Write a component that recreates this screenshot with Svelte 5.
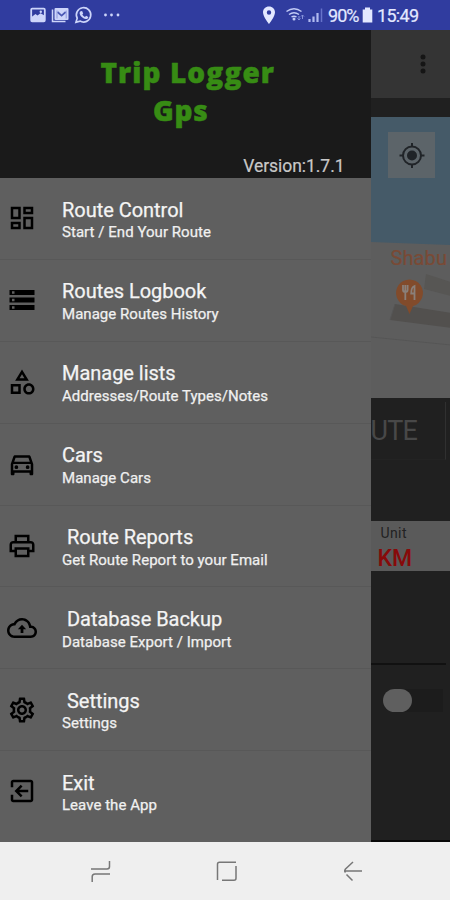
<script>
  const items = [
    { icon: 'dashboard', title: 'Route Control', sub: 'Start / End Your Route' },
    { icon: 'storage', title: 'Routes Logbook', sub: 'Manage Routes History' },
    { icon: 'category', title: 'Manage lists', sub: 'Addresses/Route Types/Notes' },
    { icon: 'car', title: 'Cars', sub: 'Manage Cars' },
    { icon: 'print', title: 'Route Reports', sub: 'Get Route Report to your Email', indent: true },
    { icon: 'backup', title: 'Database Backup', sub: 'Database Export / Import', indent: true },
    { icon: 'settings', title: 'Settings', sub: 'Settings', indent: true },
    { icon: 'exit', title: 'Exit', sub: 'Leave the App' }
  ];

  const paths = {
    dashboard: 'M19 5v2h-4V5h4M9 5v6H5V5h4m10 8v6h-4v-6h4M9 17v2H5v-2h4M21 3h-8v6h8V3zM11 3H3v10h8V3zm10 8h-8v10h8V11zm-10 4H3v6h8v-6z',
    storage: 'M2 20h20v-4H2v4zm2-3h2v2H4v-2zM2 4v4h20V4H2zm4 3H4V5h2v2zm-4 7h20v-4H2v4zm2-3h2v2H4v-2z',
    category: 'M12 2l-5.5 9h11L12 2zm0 3.84L13.93 9h-3.87L12 5.84zM17.5 13c-2.49 0-4.5 2.01-4.5 4.5s2.01 4.5 4.5 4.5 4.5-2.01 4.5-4.5-2.01-4.5-4.5-4.5zm0 7c-1.38 0-2.5-1.12-2.5-2.5s1.12-2.5 2.5-2.5 2.5 1.12 2.5 2.5-1.12 2.5-2.5 2.5zM3 21.5h8v-8H3v8zm2-6h4v4H5v-4z',
    car: 'M18.92 6.01C18.72 5.42 18.16 5 17.5 5h-11c-.66 0-1.21.42-1.42 1.01L3 12v8c0 .55.45 1 1 1h1c.55 0 1-.45 1-1v-1h12v1c0 .55.45 1 1 1h1c.55 0 1-.45 1-1v-8l-2.08-5.99zM6.85 7h10.29l1.08 3.11H5.77L6.85 7zM19 17H5v-5h14v5zM9 14.5a1.5 1.5 0 1 1-3 0 1.5 1.5 0 0 1 3 0zM18 14.5a1.5 1.5 0 1 1-3 0 1.5 1.5 0 0 1 3 0z',
    print: 'M19 8h-1V3H6v5H5c-1.66 0-3 1.34-3 3v6h4v4h12v-4h4v-6c0-1.66-1.34-3-3-3zM8 5h8v3H8V5zm8 12v2H8v-4h8v2zm2-2v-2H6v2H4v-4c0-.55.45-1 1-1h14c.55 0 1 .45 1 1v4h-2z',
    backup: 'M19.35 10.04C18.67 6.59 15.64 4 12 4 9.11 4 6.6 5.64 5.35 8.04 2.34 8.36 0 10.91 0 14c0 3.31 2.69 6 6 6h13c2.76 0 5-2.24 5-5 0-2.64-2.05-4.78-4.65-4.96zM19 18H6c-2.21 0-4-1.79-4-4 0-2.05 1.53-3.76 3.56-3.97l1.07-.11.5-.95C8.08 7.14 9.94 6 12 6c2.62 0 4.88 1.86 5.39 4.43l.3 1.5 1.53.11c1.56.1 2.78 1.41 2.78 2.96 0 1.65-1.35 3-3 3zM8.7 13h2.2v3h2.2v-3h2.2L12 9.4z',
    settings: 'M19.43 12.98c.04-.32.07-.64.07-.98 0-.34-.03-.66-.07-.98l2.11-1.65c.19-.15.24-.42.12-.64l-2-3.46c-.09-.16-.26-.25-.44-.25-.06 0-.12.01-.17.03l-2.49 1c-.52-.4-1.08-.73-1.69-.98l-.38-2.65C14.46 2.18 14.25 2 14 2h-4c-.25 0-.46.18-.49.42l-.38 2.65c-.61.25-1.17.59-1.69.98l-2.49-1c-.06-.02-.12-.03-.18-.03-.17 0-.34.09-.43.25l-2 3.46c-.13.22-.07.49.12.64l2.11 1.65c-.04.32-.07.65-.07.98 0 .33.03.66.07.98l-2.11 1.65c-.19.15-.24.42-.12.64l2 3.46c.09.16.26.25.44.25.06 0 .12-.01.17-.03l2.49-1c.52.4 1.08.73 1.69.98l.38 2.65c.03.24.24.42.49.42h4c.25 0 .46-.18.49-.42l.38-2.65c.61-.25 1.17-.59 1.69-.98l2.49 1c.06.02.12.03.18.03.17 0 .34-.09.43-.25l2-3.46c.12-.22.07-.49-.12-.64l-2.11-1.65zm-1.98-1.71c.04.31.05.52.05.73 0 .21-.02.43-.05.73l-.14 1.13.89.7 1.08.84-.7 1.21-1.27-.51-1.04-.42-.9.68c-.43.32-.84.56-1.25.73l-1.06.43-.16 1.13-.2 1.35h-1.4l-.19-1.35-.16-1.13-1.06-.43c-.43-.18-.83-.41-1.23-.71l-.91-.7-1.06.43-1.27.51-.7-1.21 1.08-.84.89-.7-.14-1.13c-.03-.31-.05-.54-.05-.74s.02-.43.05-.73l.14-1.13-.89-.7-1.08-.84.7-1.21 1.27.51 1.04.42.9-.68c.43-.32.84-.56 1.25-.73l1.06-.43.16-1.13.2-1.35h1.39l.19 1.35.16 1.13 1.06.43c.43.18.83.41 1.23.71l.91.7 1.06-.43 1.27-.51.7 1.21-1.07.85-.89.7.14 1.13zM12 8c-2.21 0-4 1.79-4 4s1.79 4 4 4 4-1.79 4-4-1.79-4-4-4zm0 6c-1.1 0-2-.9-2-2s.9-2 2-2 2 .9 2 2-.9 2-2 2z',
    exit: 'M19 3H5c-1.11 0-2 .9-2 2v4h2V5h14v14H5v-4H3v4c0 1.1.89 2 2 2h14c1.1 0 2-.9 2-2V5c0-1.1-.9-2-2-2zM12.4 15.6L11 17l-5-5 5-5 1.4 1.4L9.8 11H17v2H9.8z'
  };
</script>

<div class="screen">
  <header class="status">
    <svg class="notes" width="95" height="30" viewBox="0 0 95 30">
      <rect x="1.2" y="8.7" width="13.6" height="12.6" rx="1" fill="none" stroke="#cdd5fa" stroke-width="1.8" />
      <path d="M1.5 17l4-3 2 1.600 3-2.300 4 2.200v6h-13z" fill="#cdd5fa" />
      <circle cx="10.8" cy="11.7" r="1.2" fill="#cdd5fa" />
      <path d="M22.500 9.500v12h13" fill="none" stroke="#cdd5fa" stroke-width="1.500" />
      <rect x="24.500" y="8" width="14" height="12" rx="1" fill="#cdd5fa" />
      <path d="M27.500 12l4.100 3.600 4.100-3.600" fill="none" stroke="#4b59b5" stroke-width="1.700" />
      <path d="M27 10.500v8M36.200 10.500v8" fill="none" stroke="#8e99dc" stroke-width="1" />
      <path d="M46 22.200l1.200-4a7.200 7.200 0 1 1 2.800 2.900z" fill="none" stroke="#cdd5fa" stroke-width="1.700" />
      <path d="M50.600 11.300l1.500-.3 1.100 2.400-.9 1.200c.8 1.300 1.500 1.900 2.700 2.400l1.100-1.200 2.200 1.100c0 1.600-1.300 2.200-2.500 2.100-3.200-.4-6.100-3.300-6.200-5.900 0-.8.400-1.400 1-1.800z" fill="#cdd5fa" />
      <g fill="#cdd5fa"><circle cx="75.500" cy="15" r="1.400" /><circle cx="81.500" cy="15" r="1.400" /><circle cx="88" cy="15" r="1.400" /></g>
    </svg>
    <div class="right">
      <svg width="66" height="30" viewBox="0 0 66 30">
        <path fill-rule="evenodd" d="M7 6.500c-3.500 0-6 2.600-6 5.800C1 16.700 7 24 7 24s6-7.300 6-11.700c0-3.200-2.500-5.800-6-5.800zm0 3.800a2.200 2.200 0 1 1 0 4.400 2.200 2.200 0 0 1 0-4.400z" fill="#e3e8ff" />
        <g fill="none" stroke="#c2cbf6" stroke-width="1.500"><path d="M24.500 11.500q7.500-5.500 15 0" /><path d="M27 14.500q5-3.500 10 0" /><path d="M29.500 17q2.500-1.700 5 0" /></g>
        <circle cx="32" cy="19" r="1.500" fill="#c2cbf6" />
        <path d="M37 16v4m-1.500-1.500L37 20l1.500-1.500M40.500 19v-4m-1.500 1.500l1.500-1.500 1.500 1.500" fill="none" stroke="#8793db" />
        <path d="M47.500 22v-3M51.500 22v-5.500M55.500 22v-9" stroke="#b0baf0" stroke-width="2.200" />
        <path d="M59.500 22V8.500" stroke="#6673ca" stroke-width="1.500" />
      </svg>
      <span class="pct">90%</span>
      <svg class="batt" width="11" height="30" viewBox="0 0 11 30"><path d="M3 7.500h5v2h2.300v13H.7v-13H3z" fill="#e3e8ff" /></svg>
      <span class="time">15:49</span>
    </div>
  </header>

  <main>
    <aside>
      <div class="head">
        <h1><span class="l1">Trip Logger</span><span class="l2">Gps</span></h1>
        <p>Version:1.7.1</p>
      </div>
      <ul>
        {#each items as it}
          <li>
            <svg width="30" height="30" viewBox="0 0 24 24"><path fill-rule="evenodd" d={paths[it.icon]} /></svg>
            <div>
              <strong class:indent={it.indent}>{it.title}</strong>
              <small>{it.sub}</small>
            </div>
          </li>
        {/each}
      </ul>
    </aside>

    <section>
      <div class="toolbar">
        <svg width="8" height="22" viewBox="0 0 8 22"><g fill="#151515"><circle cx="4" cy="4" r="2.500" /><circle cx="4" cy="11" r="2.500" /><circle cx="4" cy="18" r="2.500" /></g></svg>
      </div>
      <div class="map">
        <svg width="80" height="281" viewBox="0 0 80 281">
          <rect width="80" height="281" fill="#5d5d5d" />
          <path d="M0 0h80v128L0 125z" fill="#455a68" />
          <path d="M55 157l25 8v14l-27-7z" fill="#575654" />
          <path d="M24 187l56 9v15l-61-8z" fill="#52504e" />
          <path d="M19 203l5-16M0 220l80 8" fill="none" stroke="#565656" />
          <rect x="17" y="15" width="47" height="46" fill="#5c6469" />
          <g transform="translate(41 38.500)"><circle r="5" fill="#202428" /><circle r="9" fill="none" stroke="#202428" stroke-width="2" /><path d="M0-12.500V-9M0 9v3.500M-12.500 0H-9M9 0h3.500" stroke="#202428" stroke-width="2" /></g>
          <path d="M38.500 197l-3.500-8a13.500 13.500 0 1 1 7 0z" fill="#824b2b" />
          <path d="M32 168v5q0 2 2.300 2t2.300-2v-5M34.300 168v15M43.500 183v-14q-3.300 1-3.300 7.500h3.300" fill="none" stroke="#8a807a" stroke-width="1.800" />
        </svg>
        <span class="poi">Shabu</span>
      </div>
      <div class="action"><span>UTE</span></div>
      <div class="unit"><span>Unit</span><b>KM</b></div>
      <div class="opts"><div class="switch"><i></i></div></div>
    </section>
  </main>

  <nav>
    <svg width="450" height="58" viewBox="0 0 450 58" fill="none" stroke="#777" stroke-width="1.500">
      <path d="M91 27h16q2.500 0 2.500-2.500V19M110 32H95q-2.800 0-2.800 2.800V40" />
      <path d="M236 20.200h-16.500q-2 0-2 2V38M222 38.200h12q2 0 2-2V24" />
      <path d="M362 29h-18M353 20l-7.500 7q-1.500 2 0 3.500M346.500 32.500l6 6" />
    </svg>
  </nav>
</div>

<style>
  :global(body) { margin: 0; }
  .screen { width: 450px; height: 900px; overflow: hidden; display: flex; flex-direction: column; font-family: Roboto, sans-serif; background: #202020; }
  svg { display: block; flex: none; }
  .status { height: 30px; flex: none; box-sizing: border-box; background: #303c9f; display: flex; justify-content: space-between; padding: 0 30px; color: #e3e8ff; }
  .right { display: flex; align-items: center; line-height: 31px; font-size: 18px; -webkit-text-stroke: 0.2px #e3e8ff; }
  .pct { width: 30px; letter-spacing: -0.95px; white-space: nowrap; }
  .batt { margin: 0 4px 0 4px; }
  .time { width: 43px; letter-spacing: -0.7px; white-space: nowrap; }
  main { height: 811.500px; flex: none; display: flex; }
  aside { width: 370.500px; flex: none; background: #5f5f5f; }
  .head { height: 147.500px; background: #1a1a1a; display: flex; flex-direction: column; justify-content: space-between; }
  h1 { margin: 23px 0 0; padding-left: 5px; display: flex; flex-direction: column; align-items: center; font: 900 28px/38px "Open Sans", sans-serif; color: #378c14; -webkit-text-stroke: 0.5px #378c14; }
  .l1 { letter-spacing: 1.1px; }
  .l2 { margin-right: 14px; letter-spacing: 0.8px; }
  p { margin: 0 26px 1px; text-align: right; font-size: 17.500px; line-height: 21px; color: #c8c8c8; letter-spacing: -0.05px; -webkit-text-stroke: 0.2px #c8c8c8; }
  ul { list-style: none; margin: 0; padding: 0.500px 0 0; }
  li { height: 81.900px; box-sizing: border-box; border-bottom: 1px solid #585858; display: flex; padding: 25.200px 0 0 7px; gap: 25px; }
  li:last-child { border-bottom: 0; }
  li div { display: flex; flex-direction: column; margin-top: -5.600px; }
  strong { font-weight: 400; font-size: 20px; line-height: 24.500px; color: #f4f4f4; letter-spacing: -0.03px; -webkit-text-stroke: 0.25px #f4f4f4; }
  .indent { padding-left: 5px; }
  small { font-size: 15px; line-height: 20px; color: #f0f0f0; letter-spacing: 0.04px; -webkit-text-stroke: 0.25px #f0f0f0; }
  section { flex: 1; min-width: 0; background: #202020; display: flex; flex-direction: column; }
  .toolbar { height: 67.500px; background: #343434; display: flex; justify-content: center; align-items: center; padding-left: 25px; box-sizing: border-box; }
  .map { height: 281px; margin-top: 19.500px; position: relative; overflow: hidden; }
  .poi { position: absolute; left: 20px; top: 129px; font-size: 20px; line-height: 24px; color: #7a4a35; letter-spacing: 0.1px; -webkit-text-stroke: 0.2px #7a4a35; }
  .action { height: 123px; box-sizing: border-box; padding-top: 4px; }
  .action span { display: block; height: 58px; width: 75px; border-right: 1px solid #303030; border-bottom: 1px solid #232323; box-sizing: border-box; font-size: 27px; line-height: 59px; color: #484848; letter-spacing: -0.800px; }
  .unit { height: 50px; background: #5a5a5a; display: flex; flex-direction: column; padding: 2px 0 0 8px; box-sizing: border-box; }
  .unit span { font-size: 14px; line-height: 20px; color: #222; padding-left: 2px; letter-spacing: 0.4px; }
  .unit b { font-size: 23px; line-height: 31px; font-weight: 500; color: #870a0a; margin-left: -1px; }
  .opts { flex: 1; border-bottom: 2px solid #080808; }
  .switch { margin: 92px 4px 0 0; border-top: 2px solid #111; padding: 24px 3px 0 12px; }
  .switch i { display: block; height: 23px; border-radius: 12px 0 0 12px; background: #1c1c1c; }
  .switch i::before { content: ""; display: block; width: 29px; height: 23px; border-radius: 12px; background: #5f5f5f; }
  nav { flex: 1; background: #efefef; }
</style>
